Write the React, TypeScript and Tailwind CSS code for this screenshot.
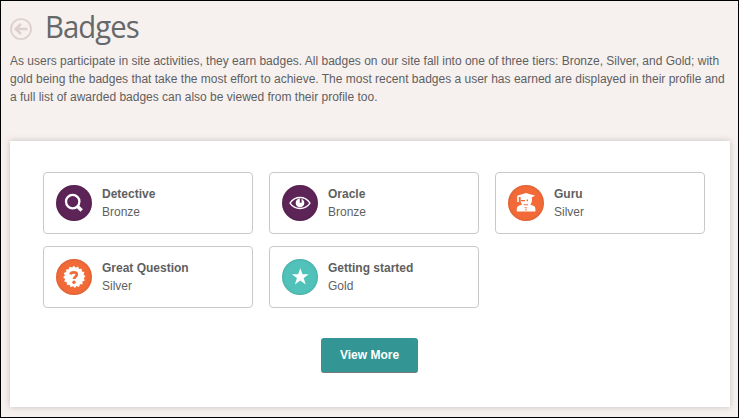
import type { ReactNode } from "react";

const glyphs: Record<string, ReactNode> = {
  search: (
    <g fill="none" stroke="#fff">
      <circle cx="16.7" cy="16.6" r="6.7" strokeWidth="2.3" />
      <path d="M21.3 21.2l4.4 4.3" strokeWidth="3.4" />
    </g>
  ),
  eye: (
    <g>
      <path d="M8 18.1C13 10.6 23 10.6 28 18.1C23 25.3 13 25.3 8 18.1Z" fill="none" stroke="#fff" strokeWidth="1.3" />
      <circle cx="18" cy="17.9" r="4.3" fill="#fff" />
      <path d="M17.8 13.4h1.8v4.4h-1.8z" fill="#5d2457" />
    </g>
  ),
  guru: (
    <g>
      <path d="M18 8l9.3 2.8-3.4 1.5v3.6c-.4 2.6-1.6 4.4-3.2 5.2h-5.2c-1.5-1-2.5-2.6-2.8-4.9v-3.9l-1.9-.5v5.2H9.2v-6.2z" fill="#fff" />
      <path d="M8.8 26.4v-2.6c0-2.4 2-3.5 5.4-4.1h7.8c3.4.6 5.4 1.7 5.4 4.1v2.6z" fill="#fff" />
      <path d="M13 15h4v1.2h-4zM18.6 14.6h1.4v1.6h-1.4zM15.6 19.2h4.4v1h-4.4zM16.8 22.2h2v1.1h-2zM17.3 24.2h1.2v1.4h-1.2z" fill="#f26a38" />
    </g>
  ),
  question: (
    <g>
      <path
        d="M18 6.8l1.8 2 2.3-1.3 1 2.5 2.6-.3.1 2.7 2.6.7-.9 2.5 2 1.7-1.8 1.9 1.2 2.3-2.5 1 .2 2.7-2.7.1-.8 2.6-2.5-.9-1.7 2-1.9-1.8-2.4 1.1-1-2.5-2.7.2-.1-2.7-2.6-.8.9-2.5-2-1.7 1.8-1.9-1.1-2.3 2.5-1-.2-2.7 2.7-.1.8-2.6 2.5.9z"
        fill="#fff"
      />
      <path d="M14.4 15.4c.4-1.4 1.8-2 3.4-2 1.9 0 3 .8 3 2.1 0 2.2-2.8 2.2-2.8 4.6" fill="none" stroke="#f26a38" strokeWidth="2.7" />
      <circle cx="18" cy="23.2" r="1.7" fill="#f26a38" />
    </g>
  ),
  star: <path d="M18.3 9.2l2.2 6.1h6.3l-5.1 3.8 2 6.3-5.4-3.8-5.4 3.8 2-6.3-5.1-3.8h6.3z" fill="#fff" />,
};

const badges = [
  { name: "Detective", tier: "Bronze", icon: "search", color: "bg-[#5d2457]" },
  { name: "Oracle", tier: "Bronze", icon: "eye", color: "bg-[#5d2457]" },
  { name: "Guru", tier: "Silver", icon: "guru", color: "bg-[#f26a38]" },
  { name: "Great Question", tier: "Silver", icon: "question", color: "bg-[#f26a38]" },
  { name: "Getting started", tier: "Gold", icon: "star", color: "bg-[#50c2ba]" },
];

function BadgeCard({ name, tier, icon, color }: (typeof badges)[number]) {
  return (
    <div className="flex h-[62px] items-center rounded-[4px] border border-[#c9c9c9] bg-white px-3">
      <div className={`size-9 shrink-0 overflow-hidden rounded-full shadow-[inset_0_0_3px_rgba(0,0,0,0.18)] ${color}`}>
        <svg viewBox="0 0 36 36" className="size-9">{glyphs[icon]}</svg>
      </div>
      <div className="ml-[10px] text-[12px] leading-[18px]">
        <div className="font-bold">{name}</div>
        <div>{tier}</div>
      </div>
    </div>
  );
}

export default function App() {
  return (
    <div className="h-[418px] w-[739px] overflow-hidden border border-black bg-[#f6f1ef] px-[9px] font-['Liberation_Sans',Arial,sans-serif] text-[#5f5f61]">
      <header className="flex h-[51px] items-start">
        <svg viewBox="0 0 22 22" className="mt-[17px] size-[22px]" fill="none" stroke="#ddcfca">
          <circle cx="11" cy="11" r="10" strokeWidth="1.7" />
          <path d="M17.5 11H6M11 5.8L5.8 11l5.2 5.2" strokeWidth="2.6" />
        </svg>
        <h1 className="ml-[13px] origin-left scale-x-[0.945] font-['Open_Sans',sans-serif] text-[31px] leading-[51px] font-normal tracking-[-1px] text-[#67686a]">
          Badges
        </h1>
      </header>
      <p className="text-[12px] leading-[18px] whitespace-nowrap">
        As users participate in site activities, they earn badges. All badges on our site fall into one of three tiers: Bronze, Silver, and Gold; with
        <br />
        gold being the badges that take the most effort to achieve. The most recent badges a user has earned are displayed in their profile and
        <br />a full list of awarded badges can also be viewed from their profile too.
      </p>
      <main className="mt-[35px] h-[266px] w-[720px] bg-white pt-[31px] pr-[25px] pl-[33px] shadow-[0_0_6px_rgba(90,70,80,0.3)]">
        <div className="grid grid-cols-[210px_210px_210px] gap-x-4 gap-y-3">
          {badges.map((badge) => (
            <BadgeCard key={badge.name} {...badge} />
          ))}
        </div>
        <div className="mt-[30px] flex justify-center">
          <button className="mr-[9px] h-[35px] w-[97px] rounded-[3px] border-b border-[#777d7c] bg-[#339694] text-[12px] font-bold text-white">
            View More
          </button>
        </div>
      </main>
    </div>
  );
}
